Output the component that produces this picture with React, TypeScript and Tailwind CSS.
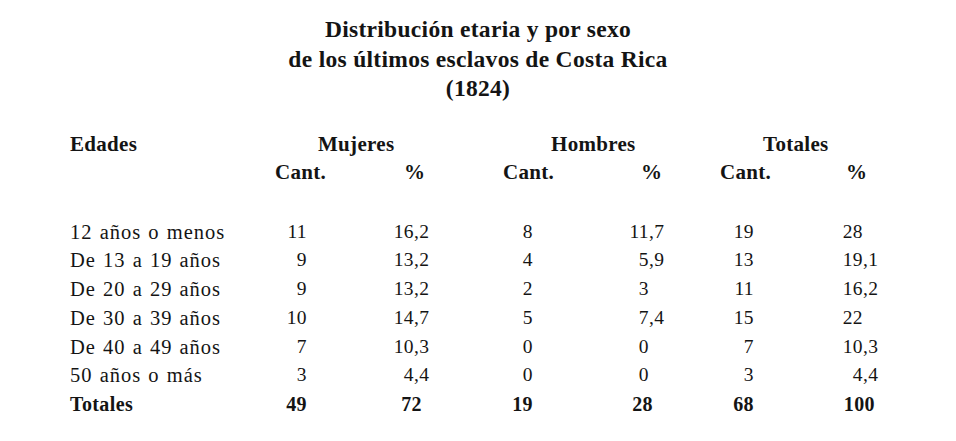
const rows = [
  { label: '12 años o menos', m: '11', mp: ['16', ',2'], h: '8', hp: ['11', ',7'], t: '19', tp: ['28', ''] },
  { label: 'De 13 a 19 años', m: '9', mp: ['13', ',2'], h: '4', hp: ['5', ',9'], t: '13', tp: ['19', ',1'] },
  { label: 'De 20 a 29 años', m: '9', mp: ['13', ',2'], h: '2', hp: ['3', ''], t: '11', tp: ['16', ',2'] },
  { label: 'De 30 a 39 años', m: '10', mp: ['14', ',7'], h: '5', hp: ['7', ',4'], t: '15', tp: ['22', ''] },
  { label: 'De 40 a 49 años', m: '7', mp: ['10', ',3'], h: '0', hp: ['0', ''], t: '7', tp: ['10', ',3'] },
  { label: '50 años o más', m: '3', mp: ['4', ',4'], h: '0', hp: ['0', ''], t: '3', tp: ['4', ',4'] },
]

const GRID = 'grid grid-cols-[190px_47px_143px_83px_147px_74px_146px]'

function Pct({ v, box }: { v: string[]; box: string }) {
  return (
    <div className="flex">
      <span className={`${box} text-right`}>{v[0]}</span>
      <span>{v[1]}</span>
    </div>
  )
}

export default function App() {
  return (
    <div
      className="w-[956px] h-[441px] bg-white text-[#141414] overflow-hidden"
      style={{ fontFamily: '"Liberation Serif", "DejaVu Serif", serif' }}
    >
      <div className="pt-[15px] text-center font-bold text-[23.5px] leading-[29.5px] tracking-[0.3px]">
        <div>Distribución etaria y por sexo</div>
        <div>de los últimos esclavos de Costa Rica</div>
        <div>(1824)</div>
      </div>

      <div className="pl-[70px] mt-[26px] font-bold text-[21px] leading-[28px] tracking-[0.3px]">
        <div className={GRID}>
          <div>Edades</div>
          <div className="col-span-2 pl-[58px]">Mujeres</div>
          <div className="col-span-2 pl-[101px]">Hombres</div>
          <div className="col-span-2 pl-[83px]">Totales</div>
        </div>
        <div className={GRID}>
          <div></div>
          <div className="col-span-2 pl-[15px] flex">
            <span className="w-[129px]">Cant.</span>
            <span>%</span>
          </div>
          <div className="col-span-2 pl-[53px] flex">
            <span className="w-[138px]">Cant.</span>
            <span>%</span>
          </div>
          <div className="col-span-2 pl-[40px] flex">
            <span className="w-[126px]">Cant.</span>
            <span>%</span>
          </div>
        </div>
      </div>

      <div className="pl-[70px] mt-[32px] text-[19.5px] leading-[28.8px] tracking-[0.4px]">
        {rows.map(r => (
          <div key={r.label} className={GRID}>
            <div className="whitespace-nowrap text-[20.5px] tracking-[1px] [word-spacing:1px]">{r.label}</div>
            <div className="text-right">{r.m}</div>
            <Pct v={r.mp} box="w-[107px]" />
            <div className="text-right">{r.h}</div>
            <Pct v={r.hp} box="w-[116px]" />
            <div className="text-right">{r.t}</div>
            <Pct v={r.tp} box="w-[109px]" />
          </div>
        ))}
        <div className={`${GRID} font-bold text-[20px]`}>
          <div>Totales</div>
          <div className="text-right">49</div>
          <div className="w-[115px] text-right">72</div>
          <div className="text-right">19</div>
          <div className="w-[120px] text-right">28</div>
          <div className="text-right">68</div>
          <div className="w-[121px] text-right">100</div>
        </div>
      </div>
    </div>
  )
}
